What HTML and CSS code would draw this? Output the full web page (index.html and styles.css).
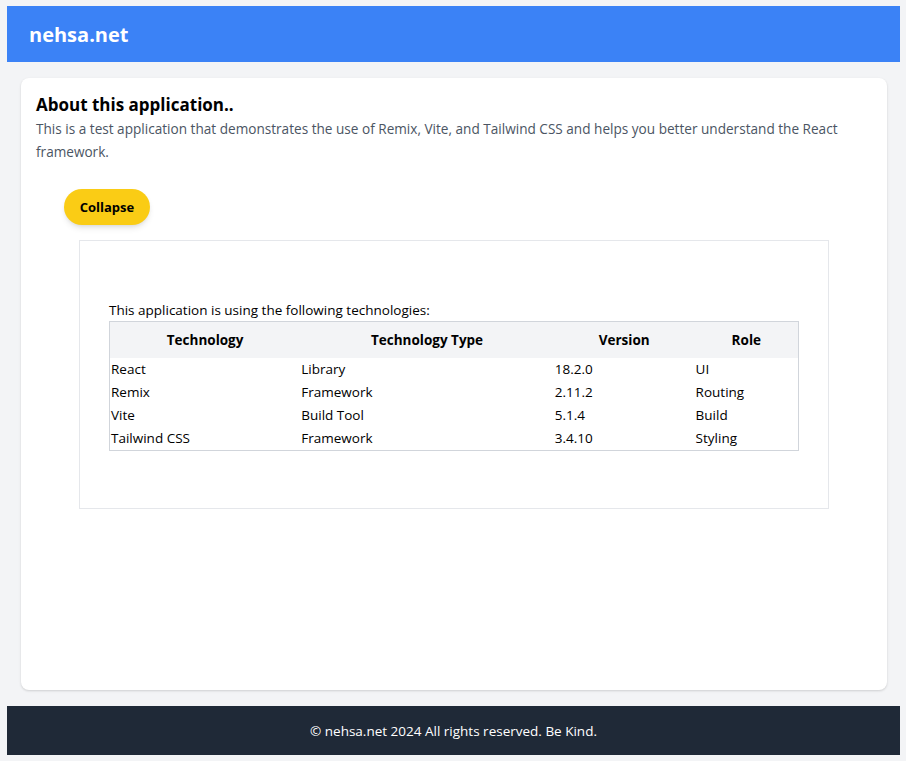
FILE: index.html
```html
<!DOCTYPE html>
<html lang="en">
<head>
<meta charset="utf-8">
<title>nehsa.net</title>
<link rel="stylesheet" href="styles.css">
</head>
<body>
<div class="page">
  <header class="site-header">
    <h1 class="brand">nehsa.net</h1>
  </header>
  <main class="card">
    <h2 class="card-title">About this application..</h2>
    <p class="card-desc">This is a test application that demonstrates the use of Remix, Vite, and Tailwind CSS and helps you better understand the React framework.</p>
    <button class="btn-collapse" type="button">Collapse</button>
    <section class="tech-box">
      <p class="tech-intro">This application is using the following technologies:</p>
      <table class="tech-table">
        <thead>
          <tr>
            <th class="c1">Technology</th>
            <th class="c2">Technology Type</th>
            <th class="c3">Version</th>
            <th class="c4">Role</th>
          </tr>
        </thead>
        <tbody>
          <tr><td>React</td><td>Library</td><td>18.2.0</td><td>UI</td></tr>
          <tr><td>Remix</td><td>Framework</td><td>2.11.2</td><td>Routing</td></tr>
          <tr><td>Vite</td><td>Build Tool</td><td>5.1.4</td><td>Build</td></tr>
          <tr><td>Tailwind CSS</td><td>Framework</td><td>3.4.10</td><td>Styling</td></tr>
        </tbody>
      </table>
    </section>
  </main>
  <footer class="site-footer">
    <p>© nehsa.net 2024 All rights reserved. Be Kind.</p>
  </footer>
</div>
</body>
</html>
```

FILE: styles.css
```css
* { box-sizing: border-box; }
html, body { margin: 0; padding: 0; }
body {
  background: #f3f4f6;
  font-family: "Open Sans", "Lato", sans-serif;
  color: #111827;
}
.page {
  min-height: 100vh;
  display: flex;
  flex-direction: column;
  padding: 6px 6px 6px 7px;
}
.site-header {
  background: #3b82f6;
  height: 56px;
  display: flex;
  align-items: center;
  padding-left: 22px;
}
.brand {
  margin: 0;
  color: #ffffff;
  font-size: 20px;
  font-weight: 700;
}
.card {
  flex: 1;
  margin: 16px 13px 16px 14px;
  background: #ffffff;
  border-radius: 8px;
  box-shadow: 0 1px 3px rgba(0,0,0,0.1), 0 1px 2px rgba(0,0,0,0.06);
  padding: 15px 15px 20px 15px;
}
.card-title {
  margin: 0;
  font-size: 17px;
  font-weight: 700;
  color: #000;
  line-height: 24px;
}
.card-desc {
  margin: 0;
  font-size: 13.6px;
  line-height: 23px;
  color: #4b5563;
}
.btn-collapse {
  margin: 26px 0 0 28px;
  height: 36px;
  width: 86px;
  border: none;
  border-radius: 18px;
  background: #facc15;
  color: #000;
  font-family: inherit;
  font-size: 13px;
  font-weight: 700;
  box-shadow: 0 4px 6px -1px rgba(0,0,0,0.1), 0 2px 4px -2px rgba(0,0,0,0.1);
  display: block;
}
.tech-box {
  margin: 15px 43px 0 43px;
  border: 1px solid #e5e7eb;
  padding: 59px 29px 57px 29px;
}
.tech-intro {
  margin: 0;
  font-size: 13.5px;
  line-height: 21px;
  color: #000;
}
.tech-table {
  width: 690px;
  border-collapse: collapse;
  border: 1px solid #d1d5db;
  font-size: 13.5px;
  line-height: 21px;
  color: #000;
}
.tech-table thead tr { background: #f3f4f6; }
.tech-table th {
  padding: 8px 1px 7px;
  font-weight: 700;
  text-align: center;
}
.tech-table td {
  padding: 1px;
  text-align: left;
}
.c1 { width: 191px; }
.c2 { width: 254px; }
.c3 { width: 141px; }
.c4 { width: 104px; }
.site-footer {
  background: #1f2937;
  height: 49px;
  display: flex;
  align-items: center;
  justify-content: center;
}
.site-footer p {
  margin: 0;
  color: #fff;
  font-size: 13.5px;
}
```
